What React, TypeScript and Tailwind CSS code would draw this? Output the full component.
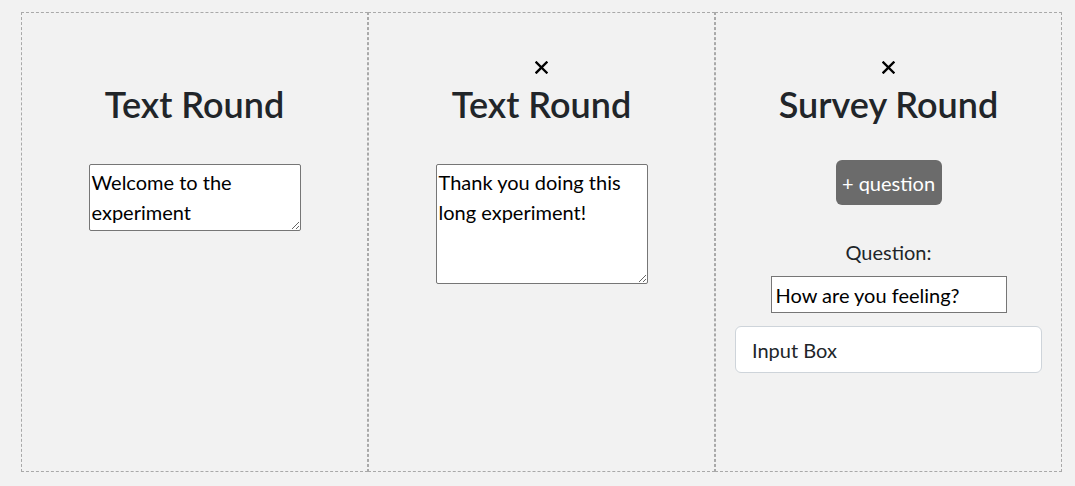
import React from 'react'

const font = { fontFamily: 'Lato, "Noto Sans", sans-serif' }

function CloseMark({ hidden }: { hidden?: boolean }) {
  return (
    <button className={`h-[13px] w-[13px] ${hidden ? 'invisible' : ''}`} aria-label="remove round">
      <svg viewBox="0 0 13 13" width="13" height="13">
        <path d="M1.5 1.5 L11.5 11.5 M11.5 1.5 L1.5 11.5" stroke="#000" strokeWidth="2.4" strokeLinecap="square" />
      </svg>
    </button>
  )
}

function TextRound({ text, first, height }: { text: string; first?: boolean; height: string }) {
  return (
    <div className="flex w-[347px] flex-col items-center border border-dashed border-[#a9a9a9] pt-[48px]">
      <CloseMark hidden={first} />
      <h1 className="mt-[6px] text-[36px] leading-[48px] font-semibold text-[#212529]">Text Round</h1>
      <textarea
        defaultValue={text}
        className={`mt-[36px] w-[212px] ${height} rounded-[2px] border border-[#767676] bg-white p-[2px] text-[20px] leading-[30px] text-black`}
      />
    </div>
  )
}

function SurveyRound() {
  return (
    <div className="flex w-[347px] flex-col items-center border border-dashed border-[#a9a9a9] pt-[48px]">
      <CloseMark />
      <h1 className="mt-[6px] text-[36px] leading-[48px] font-semibold text-[#212529]">Survey Round</h1>
      <button className="mt-[32px] h-[45px] w-[106px] rounded-[6px] bg-[#6b6b6b] text-[20px] text-white">
        + question
      </button>
      <label className="mt-[32px] text-[20px] leading-[30px] text-[#212529]">Question:</label>
      <input
        defaultValue="How are you feeling?"
        className="mt-[9px] h-[37px] w-[236px] border border-[#767676] bg-white px-[4px] text-[20px] text-black"
      />
      <div className="mt-[13px] flex h-[47px] w-[307px] items-center rounded-[6px] border border-[#ced4da] bg-white px-[16px] text-[20px] text-[#212529]">
        Input Box
      </div>
    </div>
  )
}

export default function App() {
  return (
    <div className="min-h-[486px] w-[1075px] bg-[#f2f2f2] pt-[12px] pl-[21px]" style={font}>
      <div className="flex h-[460px]">
        <TextRound first text="Welcome to the experiment" height="h-[67px]" />
        <TextRound text="Thank you doing this long experiment!" height="h-[120px]" />
        <SurveyRound />
      </div>
    </div>
  )
}
